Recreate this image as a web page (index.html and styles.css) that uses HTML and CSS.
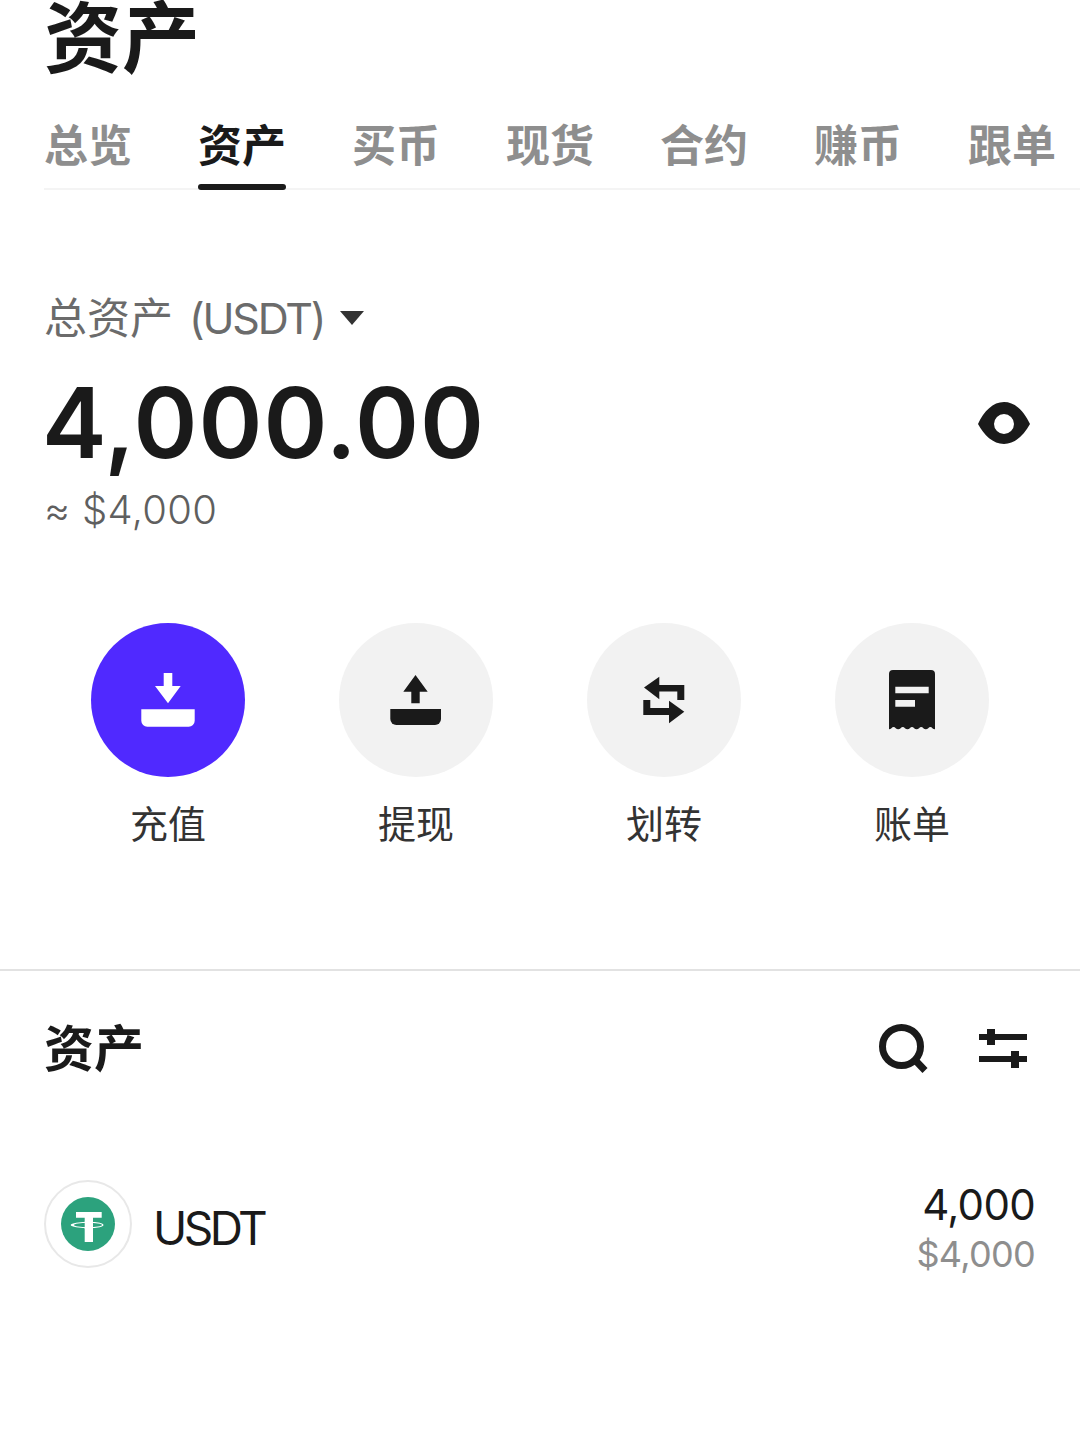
FILE: index.html
```html
<!DOCTYPE html>
<html lang="zh-CN">
<head>
  <meta charset="UTF-8">
  <title>资产</title>
  <meta name="viewport" content="width=device-width, initial-scale=1.0">
  <link rel="stylesheet" href="styles.css">
</head>
<body>

  <h1 class="page-title">资产</h1>

  <!-- Tabs -->
  <nav class="tabs">
    <span class="tab">总览</span>
    <span class="tab active">资产</span>
    <span class="tab">买币</span>
    <span class="tab">现货</span>
    <span class="tab">合约</span>
    <span class="tab">赚币</span>
    <span class="tab">跟单</span>
  </nav>

  <!-- Balance -->
  <section class="balance">
    <div class="balance-label">总资产 <span class="unit">(USDT)</span> <i class="caret"></i></div>
    <div class="balance-row">
      <div class="balance-value">4,000.00</div>
      <svg class="eye" viewBox="0 0 52 42">
        <path fill-rule="evenodd" d="M0 22C6 9 15 0 26 0s20 9 26 22C46 33 37 42 26 42S6 33 0 22ZM26 12a10 10 0 1 0 0 20 10 10 0 0 0 0-20Z"/>
      </svg>
    </div>
    <div class="balance-usd">≈ $4,000</div>
  </section>

  <!-- Actions -->
  <section class="actions">
    <div class="action">
      <div class="action-circle primary">
        <svg viewBox="0 0 154 154" fill="#fff">
          <path d="M72.7 50h8.6v13h8.4L77 80.3 64 63h8.7Z"/>
          <path d="M50.3 86.3h53.4v11.4a6 6 0 0 1-6 6H56.3a6 6 0 0 1-6-6Z"/>
        </svg>
      </div>
      <span>充值</span>
    </div>
    <div class="action">
      <div class="action-circle">
        <svg viewBox="0 0 154 154">
          <path d="M76.5 52l12.2 16.7h-8v11.6h-8.4V68.7h-8Z"/>
          <path d="M51.3 86H102v10a6 6 0 0 1-6 6H57.3a6 6 0 0 1-6-6Z"/>
        </svg>
      </div>
      <span>提现</span>
    </div>
    <div class="action">
      <div class="action-circle">
        <svg viewBox="0 0 154 154">
          <path d="M57 64.5 72.3 53.7V62h25v15h-7v-8.500H72.300v7.800Z"/>
          <path d="M97.300 88.700 82 100.300V92H56.300V77h7v8H82v-7.300Z"/>
        </svg>
      </div>
      <span>划转</span>
    </div>
    <div class="action">
      <div class="action-circle">
        <svg viewBox="0 0 154 154">
          <path fill-rule="evenodd" d="M58 47h38a4 4 0 0 1 4 4v55.300c-2.300 0-3-2.300-4.600-2.300s-2.600 2.300-4.600 2.300-3-2.300-4.600-2.300-2.600 2.300-4.600 2.300-3-2.300-4.600-2.300-2.600 2.300-4.600 2.300-3-2.300-4.600-2.300-2.600 2.300-4.600 2.300-3-2.300-4.600-2.300-2.600 2.300-4.600 2.300V51a4 4 0 0 1 4-4ZM60.300 63.700v6.600h33.400v-6.600ZM60.300 77v6.700H80V77Z"/>
        </svg>
      </div>
      <span>账单</span>
    </div>
  </section>

  <hr class="divider">

  <!-- Asset list -->
  <section class="assets">
    <div class="assets-head">
      <h2>资产</h2>
      <div class="assets-tools">
        <svg class="tool-search" viewBox="0 0 50 50">
          <circle cx="22.500" cy="22.500" r="19" fill="none" stroke="#1a1a1a" stroke-width="7"/>
          <path d="M36 36l10 10.500" fill="none" stroke="#1a1a1a" stroke-width="7"/>
        </svg>
        <svg class="tool-filter" viewBox="0 0 48 40">
          <path d="M0 5h8V0h8v5h32v6H16v5H8v-5H0ZM0 27h32v-5h8v5h8v6h-8v6h-8v-6H0Z"/>
        </svg>
      </div>
    </div>

    <div class="asset-row">
      <div class="coin">
        <svg viewBox="0 0 54 54">
          <circle cx="27" cy="27" r="27" fill="#2ca27d"/>
          <path d="M15 15h25.700v5.700H32v4.200c4 .2 10.500 1 10.500 3 0 2-6.500 2.900-10.500 3.100V45h-8.300V31c-4-.2-14-1.100-14-3.100s10-2.800 14-3V20.700H15Z" fill="#fff"/>
          <ellipse cx="27" cy="28" rx="14" ry="2.200" fill="#2ca27d"/>
          <path d="M23.700 24.500h8.300v7.500h-8.300Z" fill="#fff"/>
        </svg>
      </div>
      <span class="coin-name">USDT</span>
      <div class="coin-values">
        <div class="coin-amount">4,000</div>
        <div class="coin-usd">$4,000</div>
      </div>
    </div>
  </section>

</body>
</html>
```

FILE: styles.css
```css
body {
  margin: 0;
  width: 1080px;
  height: 1446px;
  overflow: hidden;
  background-color: #ffffff;
  color: #1a1a1a;
  font-family: Inter, "Noto Sans CJK SC", sans-serif;
}

.page-title {
  margin: 0;
  padding-left: 44px;
  font-size: 78px;
  line-height: 78px;
  font-weight: 700;
}

.tabs {
  display: flex;
  gap: 66px;
  margin: 30px 0 0 44px;
  height: 82px;
  border-bottom: 2px solid #f4f4f4;
  box-sizing: border-box;
}

.tab {
  position: relative;
  font-size: 44px;
  line-height: 76px;
  font-weight: 700;
  color: #8e8e8e;
}

.tab.active {
  color: #1a1a1a;
}

.tab.active:after {
  content: "";
  position: absolute;
  left: 0;
  right: 0;
  bottom: -2px;
  height: 6px;
  border-radius: 3px;
  background-color: #1a1a1a;
}

.balance {
  padding: 99px 44px 0 44px;
}

.balance-label {
  display: flex;
  align-items: center;
  gap: 16px;
  font-size: 43px;
  line-height: 58px;
  color: #6b6b6b;
}

.unit {
  letter-spacing: -2.2px;
}

.caret {
  width: 0;
  height: 0;
  border-left: 12px solid transparent;
  border-right: 12px solid transparent;
  border-top: 14px solid #333;
}

.balance-row {
  display: flex;
  justify-content: space-between;
  align-items: center;
  margin-top: 21px;
}

.balance-value {
  margin-left: -2px;
  font-size: 97px;
  line-height: 110px;
  letter-spacing: 1px;
  font-weight: 600;
}

.eye {
  width: 52px;
  height: 42px;
  margin-right: 6px;
  fill: #1a1a1a;
}

.balance-usd {
  margin-top: 7px;
  font-size: 40px;
  line-height: 50px;
  letter-spacing: 0.3px;
  font-weight: 300;
  color: #5f5f5f;
}

.actions {
  display: flex;
  gap: 94px;
  padding: 88px 0 0 91px;
}

.action {
  display: flex;
  flex-direction: column;
  align-items: center;
  gap: 22px;
  font-size: 38px;
  line-height: 50px;
  color: #333;
}

.action-circle {
  width: 154px;
  height: 154px;
  border-radius: 50%;
  background-color: #f2f2f2;
}

.action-circle.primary {
  background-color: #5029ff;
}

.action-circle svg {
  display: block;
  width: 154px;
  height: 154px;
  fill: #1a1a1a;
}

.action-circle.primary svg {
  fill: #fff;
}

.divider {
  margin: 120px 0 0;
  border: 0;
  border-top: 2px solid #e2e2e2;
}

.assets {
  padding: 0 44px;
}

.assets-head {
  display: flex;
  justify-content: space-between;
  align-items: center;
  margin-top: 46px;
  height: 60px;
}

.assets-head h2 {
  margin: 0 0 4px;
  font-size: 50px;
  font-weight: 700;
}

.assets-tools {
  display: flex;
  align-items: center;
  gap: 50px;
  padding: 4px 9px 0 0;
}

.tool-search {
  width: 50px;
  height: 50px;
}

.tool-filter {
  width: 48px;
  height: 40px;
  fill: #1a1a1a;
}

.asset-row {
  display: flex;
  align-items: center;
  margin-top: 101px;
}

.coin {
  display: flex;
  align-items: center;
  justify-content: center;
  width: 88px;
  height: 88px;
  margin-bottom: 8px;
  box-sizing: border-box;
  border: 2px solid #e8e8e8;
  border-radius: 50%;
}

.coin svg {
  width: 54px;
  height: 54px;
}

.coin-name {
  margin-left: 21px;
  font-size: 46px;
  letter-spacing: -3.500px;
}

.coin-values {
  margin: 2px 1px 0 auto;
  text-align: right;
}

.coin-amount {
  font-size: 42px;
  line-height: 50px;
  letter-spacing: -0.7px;
}

.coin-usd {
  font-size: 36px;
  line-height: 48px;
  letter-spacing: -0.7px;
  color: #8e8e8e;
}
```
